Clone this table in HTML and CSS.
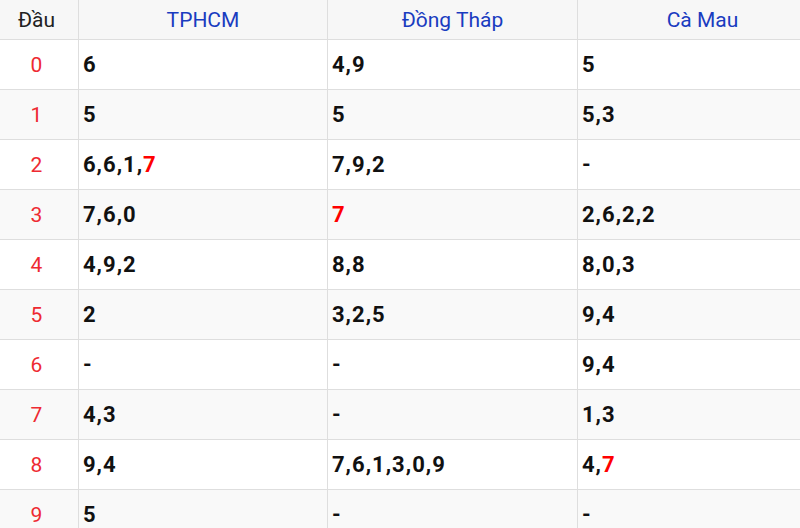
FILE: index.html
```html
<!DOCTYPE html>
<html>
<head>
<meta charset="utf-8">
<link rel="stylesheet" href="styles.css">
</head>
<body>
<table class="loto">
  <colgroup>
    <col class="c-dau">
    <col class="c-prov1">
    <col class="c-prov">
    <col class="c-prov">
  </colgroup>
  <thead>
    <tr><th class="dau">Đầu</th><th>TPHCM</th><th>Đồng Tháp</th><th>Cà Mau</th></tr>
  </thead>
  <tbody>
    <tr><td class="dau">0</td><td>6</td><td>4,9</td><td>5</td></tr>
    <tr><td class="dau">1</td><td>5</td><td>5</td><td>5,3</td></tr>
    <tr><td class="dau">2</td><td>6,6,1,<span class="hit">7</span></td><td>7,9,2</td><td>-</td></tr>
    <tr><td class="dau">3</td><td>7,6,0</td><td><span class="hit">7</span></td><td>2,6,2,2</td></tr>
    <tr><td class="dau">4</td><td>4,9,2</td><td>8,8</td><td>8,0,3</td></tr>
    <tr><td class="dau">5</td><td>2</td><td>3,2,5</td><td>9,4</td></tr>
    <tr><td class="dau">6</td><td>-</td><td>-</td><td>9,4</td></tr>
    <tr><td class="dau">7</td><td>4,3</td><td>-</td><td>1,3</td></tr>
    <tr><td class="dau">8</td><td>9,4</td><td>7,6,1,3,0,9</td><td>4,<span class="hit">7</span></td></tr>
    <tr><td class="dau">9</td><td>5</td><td>-</td><td>-</td></tr>
  </tbody>
</table>
</body>
</html>
```
FILE: styles.css
```css
html, body {
  margin: 0;
  padding: 0;
  background: #fff;
  overflow: hidden;
}
body {
  width: 800px;
  height: 528px;
  font-family: Roboto, "Liberation Sans", Arial, sans-serif;
}
.loto {
  border-collapse: collapse;
  table-layout: fixed;
  width: 833px;
  margin-left: -6px;
  margin-top: -1px;
}
.c-dau { width: 84px; }
.c-prov1 { width: 249px; }
.c-prov { width: 250px; }
.loto th, .loto td {
  border: 1px solid #dedede;
  padding: 0 4px;
}
.loto th {
  height: 39px;
  font-weight: normal;
  font-size: 21px;
  color: #1a3cc0;
  background: #f7f7f7;
  text-align: center;
}
.loto th.dau {
  color: #222;
}
.loto td {
  height: 49px;
  font-size: 22px;
  letter-spacing: 1px;
  font-weight: bold;
  color: #111;
  text-align: left;
}
.loto td.dau {
  font-weight: normal;
  letter-spacing: 0;
  font-size: 21px;
  color: #ee2a32;
  text-align: center;
  padding: 0;
}
.loto tbody tr:nth-child(even) td {
  background: #f9f9f9;
}
.hit {
  color: #f00;
}
```
